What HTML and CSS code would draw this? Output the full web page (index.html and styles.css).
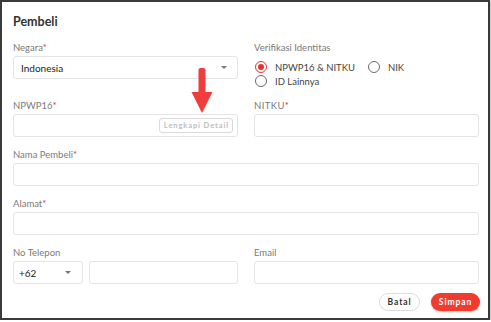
FILE: index.html
```html
<!DOCTYPE html>
<html>
<head>
<meta charset="utf-8">
<link rel="stylesheet" href="styles.css">
</head>
<body>
<div class="frame">
  <h1 class="title">Pembeli</h1>
  <div class="grid">
    <div class="field">
      <label class="label">Negara<span class="req">*</span></label>
      <div class="input select country"><span>Indonesia</span><span class="caret"></span></div>
    </div>
    <div class="field">
      <label class="label">Verifikasi Identitas</label>
      <div class="radios">
        <span class="radio checked"><span class="dot"></span>NPWP16 &amp; NITKU</span>
        <span class="radio"><span class="dot"></span>NIK</span>
        <span class="radio"><span class="dot"></span>ID Lainnya</span>
      </div>
    </div>
    <div class="field">
      <label class="label">NPWP16<span class="req">*</span></label>
      <div class="input npwp"><span class="detail">Lengkapi Detail</span></div>
    </div>
    <div class="field">
      <label class="label caps">NITKU<span class="req">*</span></label>
      <div class="input"></div>
    </div>
    <div class="field full">
      <label class="label">Nama Pembeli<span class="req">*</span></label>
      <div class="input"></div>
    </div>
    <div class="field full">
      <label class="label">Alamat<span class="req">*</span></label>
      <div class="input"></div>
    </div>
    <div class="field">
      <label class="label">No Telepon</label>
      <div class="phone">
        <div class="input select code"><span>+62</span><span class="caret"></span></div>
        <div class="input grow"></div>
      </div>
    </div>
    <div class="field">
      <label class="label">Email</label>
      <div class="input"></div>
    </div>
  </div>
  <div class="actions">
    <button class="btn ghost">Batal</button>
    <button class="btn primary">Simpan</button>
  </div>
  <svg class="arrow" width="22" height="46" viewBox="0 0 22 46">
    <rect x="7.5" y="0" width="7" height="27" rx="2" fill="#f03c3a"/>
    <polygon points="0.5,24 21.5,24 11,45" fill="#f03c3a"/>
  </svg>
</div>
</body>
</html>
```

FILE: styles.css
```css
* { box-sizing: border-box; }
html, body { margin: 0; padding: 0; background: #fff; }
body { font-family: Lato, "Noto Sans", sans-serif; color: #333; }

.frame {
  position: relative;
  width: 490px;
  height: 320px;
  border: 2px solid #3a3a3a;
  box-shadow: 1px 1px 2px rgba(0, 0, 0, 0.3);
  padding: 12px 10px 0 11px;
  background: #fff;
}

.title {
  margin: 0 0 12px 0;
  font-size: 12.5px;
  line-height: 16px;
  font-weight: 700;
  color: #333;
}

.grid {
  display: grid;
  grid-template-columns: 225px 225px;
  column-gap: 16px;
  row-gap: 12px;
}
.full { grid-column: 1 / 3; }

.field { display: flex; flex-direction: column; }
.label {
  font-size: 9.5px;
  line-height: 12px;
  color: #7a7a7a;
  margin-bottom: 2px;
}
.label.caps { letter-spacing: 0.4px; }
.req { color: #e8322f; }

.input {
  height: 23px;
  border: 1px solid #e4e4e4;
  border-radius: 3px;
  background: #fff;
  display: flex;
  align-items: center;
  padding: 0 10px 0 7px;
  font-size: 10px;
  color: #222;
}
.select { justify-content: space-between; }
.caret {
  width: 0; height: 0;
  border-left: 3px solid transparent;
  border-right: 3px solid transparent;
  border-top: 3px solid #777;
}
.npwp { justify-content: flex-end; padding-right: 4px; }
.detail {
  border: 1px solid #d9d9d9;
  border-radius: 3px;
  font-size: 7.5px;
  font-weight: 700;
  letter-spacing: 0.9px;
  color: #bdbdbd;
  padding: 0 3px 0 4px;
  line-height: 13px;
}

.radios {
  display: flex;
  flex-wrap: wrap;
  column-gap: 12px;
  padding-top: 4px;
  width: 200px;
}
.radio {
  display: flex;
  align-items: center;
  height: 14px;
  font-size: 9.5px;
  color: #444;
}
.dot {
  width: 12px; height: 12px;
  border: 1.5px solid #6a6a6a;
  border-radius: 50%;
  margin: 0 8px 0 1px;
  display: inline-block;
  position: relative;
}
.checked .dot { border-color: #e8322f; }
.checked .dot::after {
  content: "";
  position: absolute;
  left: 1.5px; top: 1.5px;
  width: 6px; height: 6px;
  border-radius: 50%;
  background: #e8322f;
}

.phone { display: flex; gap: 6px; }
.code { width: 70px; flex: none; padding-left: 5px; padding-right: 11px; }
.grow { flex: 1; }

.actions {
  display: flex;
  justify-content: flex-end;
  gap: 11px;
  margin-top: 9px;
  margin-right: -2px;
}
.btn {
  height: 18px;
  border-radius: 9px;
  font-family: Lato, "Noto Sans", sans-serif;
  font-size: 8.5px;
  font-weight: 700;
  letter-spacing: 0.9px;
  padding: 0;
  cursor: pointer;
}
.ghost { background: #fff; border: 1px solid #dcdcdc; color: #333; width: 41px; }
.primary { background: #f03c2e; border: none; color: #fff; width: 49px; box-shadow: 0 1px 2px rgba(0,0,0,0.25); }

.arrow {
  position: absolute;
  left: 189px;
  top: 66px;
}
```
